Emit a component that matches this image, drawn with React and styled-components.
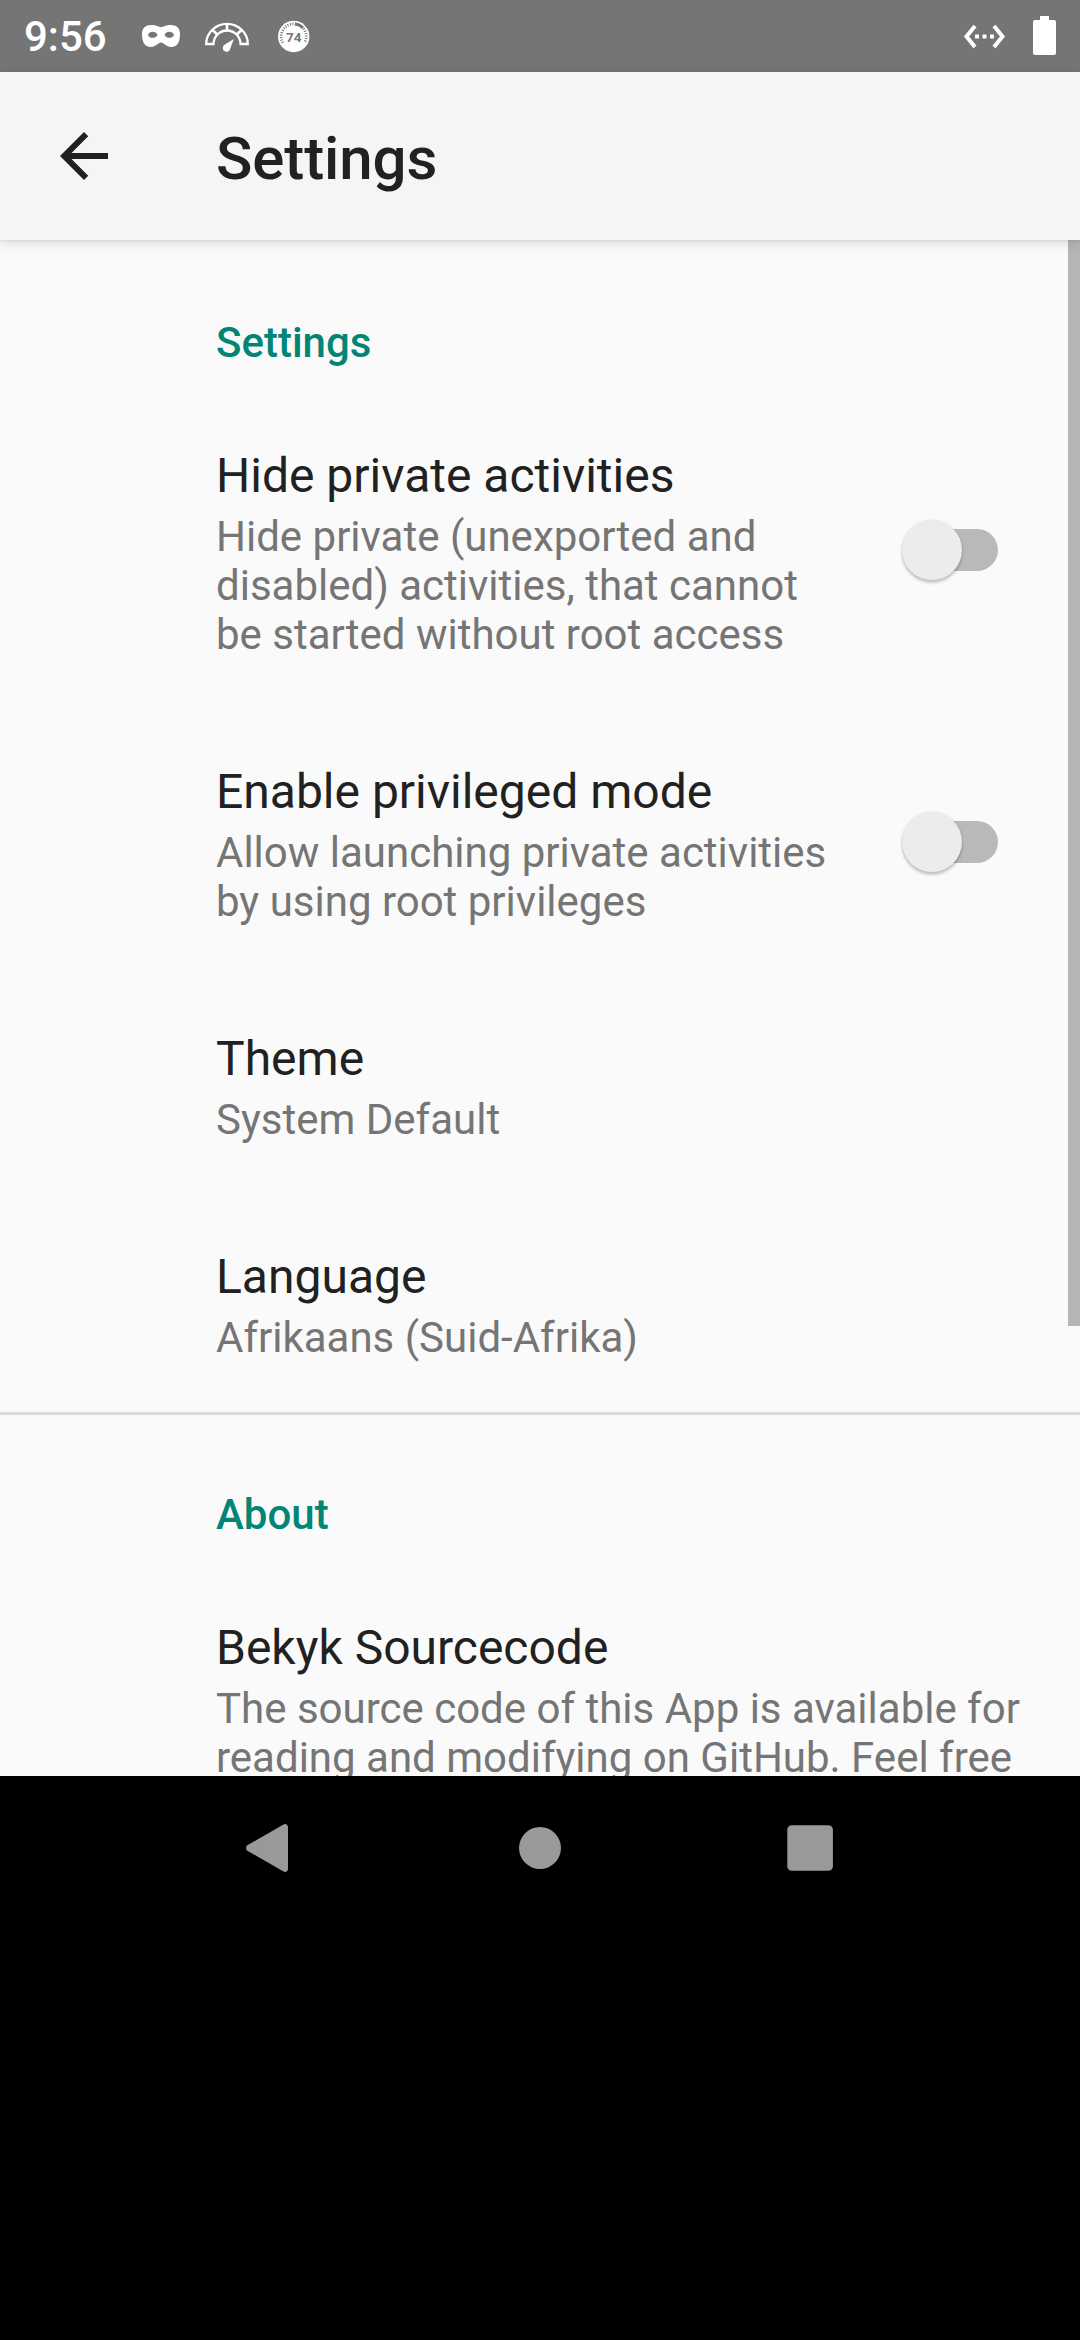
import React from "react";
import styled, { createGlobalStyle } from "styled-components";

const GlobalStyle = createGlobalStyle`
  * { box-sizing: border-box; }
  html, body { margin: 0; background: #000; }
  body { font-family: Roboto, "Noto Sans", sans-serif; }
`;

const Screen = styled.div`
  width: 1080px;
  height: 2340px;
  display: flex;
  flex-direction: column;
  background: #000;
  overflow: hidden;
`;

const StatusBar = styled.header`
  height: 72px;
  flex: none;
  display: flex;
  align-items: center;
  padding: 0 23px 0 24px;
  background: #757575;
  color: #fff;
`;

const Clock = styled.span`
  width: 112px;
  font-size: 42px;
  font-weight: 500;
  line-height: 49px;
  white-space: nowrap;
`;

const Notifications = styled.div`
  display: flex;
  align-items: center;
  gap: 18px;
`;

const SystemIcons = styled.div`
  margin-left: auto;
  display: flex;
  align-items: center;
  gap: 26px;
`;

const Icon = styled.svg`
  display: block;
  width: ${(p) => p.$w}px;
  height: ${(p) => p.$h}px;
`;

const AppBar = styled.div`
  height: 168px;
  flex: none;
  display: flex;
  align-items: center;
  padding-left: 48px;
  gap: 96px;
  background: #f5f5f5;
  box-shadow: 0 3px 12px rgba(0, 0, 0, 0.13), 0 1px 3px rgba(0, 0, 0, 0.06);
  z-index: 1;
`;

const BackButton = styled.button`
  width: 72px;
  height: 72px;
  padding: 0;
  border: 0;
  background: none;
`;

const Title = styled.h1`
  margin: 5px 0 0;
  color: #212121;
  font-size: 60px;
  font-weight: 500;
  line-height: 70px;
  letter-spacing: -0.1px;
`;

const Content = styled.main`
  position: relative;
  height: 1536px;
  flex: none;
  overflow: hidden;
  background: #fafafa;
`;

const ScrollThumb = styled.div`
  position: absolute;
  top: 0;
  right: 0;
  width: 12px;
  height: 1086px;
  background: #b5b5b5;
`;

const Section = styled.section`
  border-top: ${(p) => (p.$divided ? "3px solid #dcdcdc" : "0")};
`;

const SectionTitle = styled.h2`
  margin: 0;
  padding: ${(p) => p.$top}px 0 ${(p) => p.$bottom}px 216px;
  color: #008577;
  font-size: 42px;
  font-weight: 500;
  line-height: 49px;
`;

const Row = styled.div`
  display: flex;
  align-items: center;
  justify-content: space-between;
  padding-left: 216px;
  padding-right: ${(p) => (p.$wide ? 48 : 82)}px;
`;

const RowText = styled.div`
  width: ${(p) => (p.$wide ? 816 : 622)}px;
  display: flex;
  flex-direction: column;
  gap: 8px;
  padding: 48px 0 ${(p) => p.$bottom}px;
`;

const RowTitle = styled.div`
  color: #212121;
  font-size: 48px;
  line-height: 56px;
  white-space: nowrap;
`;

const RowSummary = styled.div`
  color: #757575;
  font-size: 42px;
  line-height: 49px;
`;

const Switch = styled.div`
  width: 96px;
  height: 60px;
  margin-bottom: ${(p) => p.$lift}px;
  display: grid;
  align-items: center;
`;

const Track = styled.div`
  grid-area: 1 / 1;
  width: 90px;
  height: 42px;
  margin-left: 6px;
  border-radius: 21px;
  background: #b9b9b9;
`;

const Thumb = styled.div`
  grid-area: 1 / 1;
  width: 60px;
  height: 60px;
  border-radius: 50%;
  background: #ececec;
  box-shadow: 0 3px 3px rgba(0, 0, 0, 0.2), 0 0 3px rgba(0, 0, 0, 0.1);
`;

const NavBar = styled.nav`
  height: 144px;
  flex: none;
  display: flex;
  align-items: center;
  justify-content: center;
  gap: 198px;
  background: #000;
`;

const DialText = styled.text`
  font-family: Roboto, sans-serif;
  font-size: 13.5px;
  font-weight: 700;
`;

const rows = [
  {
    title: "Hide private activities",
    summary:
      "Hide private (unexported and disabled) activities, that cannot be started without root access",
    bottom: 57,
    lift: 16,
  },
  {
    title: "Enable privileged mode",
    summary: "Allow launching private activities by using root privileges",
    bottom: 57,
    lift: 15,
  },
  { title: "Theme", summary: "System Default", bottom: 57 },
  { title: "Language", summary: "Afrikaans (Suid-Afrika)", bottom: 50 },
];

function Preference({ title, summary, bottom, lift, wide }) {
  return (
    <Row $wide={wide}>
      <RowText $bottom={bottom} $wide={wide}>
        <RowTitle>{title}</RowTitle>
        <RowSummary>{summary}</RowSummary>
      </RowText>
      {lift ? (
        <Switch $lift={lift} role="switch" aria-checked="false">
          <Track />
          <Thumb />
        </Switch>
      ) : null}
    </Row>
  );
}

function MaskIcon() {
  return (
    <Icon $w={50} $h={48} viewBox="0 0 50 48">
      <path
        fill="#fff"
        fillRule="evenodd"
        d="M6 22C6 16 9.500 13 15.500 13c5 0 7 2.200 9.500 2.200S29.500 13 34.500 13C40.500 13 44 16 44 22c0 7-2 13-9 13-5 0-7-4.500-10-4.500S20 35 15 35c-7 0-9-6-9-13Zm6 1c1.500 3.800 7.500 3.800 9.500 0-1.500-4.200-8-4.200-9.500 0Zm16.500 0c2 3.800 8 3.800 9.500 0-1.500-4.200-8-4.200-9.500 0Z"
      />
    </Icon>
  );
}

function GaugeIcon() {
  return (
    <Icon $w={50} $h={48} viewBox="0 0 50 48">
      <path
        fill="none"
        stroke="#fff"
        strokeWidth="2.300"
        d="M2.200 32A20.800 20.200 0 0 1 43.800 32H36.500A13.500 13.500 0 0 0 9.500 32Z"
      />
      <path
        fill="none"
        stroke="#fff"
        strokeWidth="2.600"
        d="M23 12v7.500M8.500 18l5.200 5M37.500 18l-5.200 5"
      />
      <path fill="#fff" d="M29.800 27 26.300 36.500a3.800 3.800 0 1 1-6.200-3.400Z" />
    </Icon>
  );
}

function DialIcon() {
  return (
    <Icon $w={48} $h={48} viewBox="0 0 48 48">
      <circle cx="21.700" cy="24.500" r="15.700" fill="#fff" />
      <path
        d="M10.800 30.800A12.600 12.600 0 1 1 32.600 30.800"
        fill="none"
        stroke="#757575"
        strokeWidth="2.800"
        strokeDasharray="1 1.500"
      />
      <path
        d="M23 12A12.600 12.600 0 0 1 31 16"
        fill="none"
        stroke="#757575"
        strokeWidth="2.800"
      />
      <DialText x="21.700" y="29.600" textAnchor="middle" fill="#757575">
        74
      </DialText>
    </Icon>
  );
}

export default function App() {
  return (
    <>
      <GlobalStyle />
      <Screen>
        <StatusBar>
          <Clock>9:56</Clock>
          <Notifications>
            <MaskIcon />
            <GaugeIcon />
            <DialIcon />
          </Notifications>
          <SystemIcons>
            <Icon $w={44} $h={48} viewBox="0 0 44 48">
              <path
                d="M13 14 4.500 24.500 13 35M32 14l8.500 10.500L32 35"
                fill="none"
                stroke="#fff"
                strokeWidth="4"
              />
              <path d="M13 22.500h4v4h-4Zm7.500 0h4v4h-4Zm7.500 0h4v4h-4Z" fill="#fff" />
            </Icon>
            <Icon $w={25} $h={40} viewBox="0 0 25 40">
              <path
                d="M8 0h9v4h5q2 0 2 2v31q0 2-2 2H3q-2 0-2-2V6q0-2 2-2h5Z"
                fill="#fff"
              />
            </Icon>
          </SystemIcons>
        </StatusBar>
        <AppBar>
          <BackButton aria-label="Back">
            <Icon $w={72} $h={72} viewBox="0 0 24 24">
              <path
                fill="#212121"
                d="M20 11H7.830l5.590-5.590L12 4l-8 8 8 8 1.410-1.410L7.830 13H20v-2z"
              />
            </Icon>
          </BackButton>
          <Title>Settings</Title>
        </AppBar>
        <Content>
          <Section>
            <SectionTitle $top={78} $bottom={33}>
              Settings
            </SectionTitle>
            {rows.map((row) => (
              <Preference key={row.title} {...row} />
            ))}
          </Section>
          <Section $divided>
            <SectionTitle $top={75} $bottom={33}>
              About
            </SectionTitle>
            <Preference
              wide
              title="Bekyk Sourcecode"
              summary="The source code of this App is available for reading and modifying on GitHub. Feel free"
              bottom={56}
            />
          </Section>
          <ScrollThumb />
        </Content>
        <NavBar>
          <Icon $w={72} $h={72} viewBox="0 0 72 72">
            <path
              d="M12.900 33.500Q11.200 36 12.900 38.500L49.500 59.600Q53.300 61 54 57V15Q53.300 11 49.500 12.400Z"
              fill="#999"
            />
          </Icon>
          <Icon $w={72} $h={72} viewBox="0 0 72 72">
            <circle cx="36" cy="36" r="21" fill="#999" />
          </Icon>
          <Icon $w={72} $h={72} viewBox="0 0 72 72">
            <rect x="13.300" y="13.200" width="45.600" height="45.600" rx="4.500" fill="#999" />
          </Icon>
        </NavBar>
      </Screen>
    </>
  );
}
